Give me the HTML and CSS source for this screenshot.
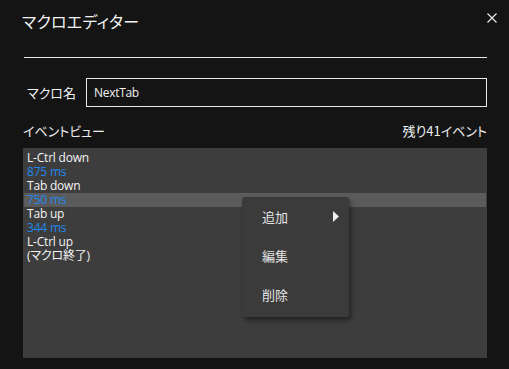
FILE: index.html
```html
<!DOCTYPE html>
<html lang="ja">
<head>
<meta charset="utf-8">
<link rel="stylesheet" href="styles.css">
</head>
<body>
<div class="dialog">
  <div class="header">
    <div class="title">マクロエディター</div>
    <svg class="close" width="10" height="10" viewBox="0 0 10 10"><path d="M0.5 0.5 L9.5 9.5 M9.5 0.5 L0.5 9.5" stroke="#e8e8e8" stroke-width="1.2" fill="none"/></svg>
  </div>
  <div class="sep"></div>
  <div class="name-row">
    <div class="label">マクロ名</div>
    <div class="input">NextTab</div>
  </div>
  <div class="events-head">
    <div>イベントビュー</div>
    <div>残り41イベント</div>
  </div>
  <div class="list">
    <div class="row">L-Ctrl down</div>
    <div class="row ms">875 ms</div>
    <div class="row">Tab down</div>
    <div class="row ms sel">750 ms</div>
    <div class="row">Tab up</div>
    <div class="row ms">344 ms</div>
    <div class="row">L-Ctrl up</div>
    <div class="row">(マクロ終了)</div>
    <div class="menu">
      <div class="item">追加<svg class="arrow" width="6" height="11" viewBox="0 0 6 11"><path d="M0 0 L6 5.5 L0 11 Z" fill="#f0f0f0"/></svg></div>
      <div class="item">編集</div>
      <div class="item">削除</div>
    </div>
  </div>
</div>
</body>
</html>
```
FILE: styles.css
```css
html, body {
  margin: 0;
  padding: 0;
  background: #141414;
  width: 509px;
  height: 369px;
  overflow: hidden;
}
body {
  font-family: "Noto Sans CJK JP", "Noto Sans", sans-serif;
  color: #f2f2f2;
  font-feature-settings: "palt";
}
.dialog {
  padding: 0 22px 0 23px;
}
.header {
  display: flex;
  justify-content: space-between;
  align-items: flex-start;
  height: 57px;
}
.title {
  font-size: 16px;
  line-height: 22px;
  margin-top: 10px;
  margin-left: -1px;
  letter-spacing: 0.2px;
}
.close {
  margin-top: 13px;
  margin-right: -10px;
}
.sep {
  height: 1px;
  background: #e6e6e6;
  margin: 0 0 0 1px;
}
.name-row {
  display: flex;
  align-items: center;
  margin-top: 20px;
}
.label {
  font-size: 13px;
  width: 63px;
  padding-left: 4px;
  box-sizing: border-box;
}
.input {
  flex: 1;
  height: 29px;
  box-sizing: border-box;
  border: 1px solid #e8e8e8;
  font-family: "Open Sans", "Noto Sans", sans-serif;
  font-size: 12px;
  line-height: 27px;
  padding-left: 7px;
  letter-spacing: -0.3px;
}
.events-head {
  display: flex;
  justify-content: space-between;
  font-size: 13px;
  line-height: 18px;
  margin-top: 15px;
  height: 26px;
  color: #ececec;
}
.list {
  position: relative;
  height: 210px;
  box-sizing: border-box;
  background: #3d3d3d;
  padding: 3px 1px;
}
.row {
  font-family: "Open Sans", "Noto Sans", "Noto Sans CJK JP", sans-serif;
  font-size: 12px;
  line-height: 14px;
  height: 14px;
  padding-left: 3px;
  color: #f4f4f4;
  letter-spacing: -0.2px;
}
.row.ms {
  color: #2188f0;
}
.row.sel {
  background: #5b5b5b;
}
.menu {
  position: absolute;
  left: 219px;
  top: 49px;
  width: 107px;
  height: 120px;
  box-sizing: border-box;
  padding-top: 0;
  background: #3b3b3b;
  border-radius: 3px;
  box-shadow: 2px 3px 5px rgba(0, 0, 0, 0.45);
}
.item {
  height: 39px;
  line-height: 39px;
  padding-left: 20px;
  font-size: 13px;
  color: #e4e4e4;
  position: relative;
  font-feature-settings: normal;
}
.arrow {
  position: absolute;
  left: 91px;
  top: 14px;
}
```
